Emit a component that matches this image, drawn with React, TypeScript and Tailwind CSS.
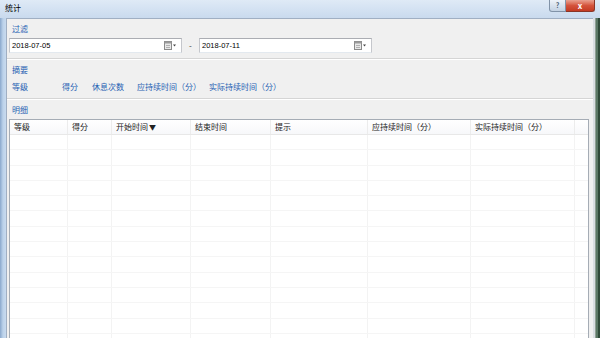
import React from 'react';

const font = { fontFamily: '"Noto Sans CJK SC", "Liberation Sans", sans-serif' };

const columns = [
  { label: '等级', w: 'w-[58px]' },
  { label: '得分', w: 'w-[44px]' },
  { label: '开始时间', w: 'w-[79px]', sort: true },
  { label: '结束时间', w: 'w-[80px]' },
  { label: '提示', w: 'w-[97px]' },
  { label: '应持续时间（分）', w: 'w-[103px]' },
  { label: '实际持续时间（分）', w: 'w-[104px]' },
  { label: '', w: 'flex-1' },
];

function CalendarIcon() {
  return (
    <svg width="13" height="9" viewBox="0 0 13 9" className="shrink-0">
      <rect x="0.5" y="0.5" width="7" height="8" fill="#e8e8e8" stroke="#8a8a8a" />
      <rect x="0.5" y="0.5" width="7" height="2" fill="#9a9a9a" />
      <line x1="2" y1="4.5" x2="6" y2="4.5" stroke="#b0b0b0" />
      <line x1="2" y1="6.5" x2="6" y2="6.5" stroke="#b0b0b0" />
      <path d="M9 3.5 L12 3.5 L10.5 5.5 Z" fill="#444" />
    </svg>
  );
}

function DateInput({ value }: { value: string }) {
  return (
    <div className="w-[173px] h-[15px] bg-white border border-[#c5c7cc] border-t-[#abadb3] border-b-[#e3e9ef] flex items-center pl-[2px] pr-[4px]">
      <span className="flex-1 text-[7.5px] text-black" style={{ fontFamily: '"Liberation Sans", sans-serif' }}>
        {value}
      </span>
      <CalendarIcon />
    </div>
  );
}

function Separator() {
  return (
    <div className="flex flex-col">
      <div className="h-px bg-[#d5d5d5]" />
      <div className="h-px bg-white" />
    </div>
  );
}

function SectionLabel({ text }: { text: string }) {
  return (
    <div className="h-[19px] pt-[4px] pl-[5px] text-[8px] leading-[12px] text-[#1f5fb3]">{text}</div>
  );
}

export default function App() {
  const rows = Array.from({ length: 14 });
  return (
    <div className="w-[600px] h-[338px] overflow-hidden flex flex-col bg-[#c5d8ed]" style={font}>
      {/* Title bar */}
      <div className="h-[18px] flex items-start bg-gradient-to-b from-[#dfeaf6] to-[#c9daee] relative">
        <span className="pl-[5px] pt-[2px] text-[8px] leading-[12px] text-black">统计</span>
        <div className="ml-auto mr-[5px] flex">
          <div className="w-[17px] h-[12px] rounded-bl-[3px] border border-t-0 border-[#8193a8] bg-gradient-to-b from-[#eef3f9] to-[#c3d2e3] flex items-center justify-center text-[7px] font-bold text-[#4a5d75] leading-none">
            ?
          </div>
          <div className="w-[29px] h-[12px] rounded-br-[3px] border border-t-0 border-l-0 border-[#8a3526] bg-gradient-to-b from-[#e8a090] via-[#d4533c] to-[#c43a22] flex items-center justify-center text-[8px] font-bold text-white leading-none">
            x
          </div>
        </div>
      </div>

      {/* Body */}
      <div className="flex-1 flex min-h-0">
        <div className="w-[6px] bg-gradient-to-r from-[#8aa8cc] via-[#bcd2ea] to-[#c8daee]" />
        <div className="flex-1 flex flex-col min-h-0 bg-[#f0f0f0] border-l border-t border-[#a0afc3]">
          {/* Filter */}
          <SectionLabel text="过滤" />
          <div className="flex items-center pl-[2px]">
            <DateInput value="2018-07-05" />
            <span className="w-[17px] text-center text-[8px] text-[#333]">-</span>
            <DateInput value="2018-07-11" />
          </div>
          <div className="mt-[5px]">
            <Separator />
          </div>

          {/* Summary */}
          <SectionLabel text="摘要" />
          <div className="h-[16px] flex items-center pl-[5px] text-[8px] text-[#1f5fb3]">
            <span className="w-[50px]">等级</span>
            <span className="w-[30px]">得分</span>
            <span className="w-[45px]">休息次数</span>
            <span className="w-[72px]">应持续时间（分）</span>
            <span>实际持续时间（分）</span>
          </div>
          <div className="mt-[3px]">
            <Separator />
          </div>

          {/* Detail */}
          <SectionLabel text="明细" />
          <div className="ml-[2px] mr-[4px] flex-1 min-h-0 bg-white border border-[#a5acb5] border-b-0 overflow-hidden flex flex-col">
            <div className="h-[15px] shrink-0 flex border-b border-[#e8e8e8] bg-gradient-to-b from-white to-[#f7f8fa]">
              {columns.map((c, i) => (
                <div
                  key={i}
                  className={`${c.w} h-full flex items-center pl-[4px] text-[8px] text-[#222] ${i < columns.length - 1 ? 'border-r border-[#ececec]' : ''}`}
                >
                  {c.label}
                  {c.sort && <span className="ml-[1px] text-[7px]">▼</span>}
                </div>
              ))}
            </div>
            {rows.map((_, r) => (
              <div key={r} className="h-[15.3px] shrink-0 flex border-b border-[#f5f5f5]">
                {columns.map((c, i) => (
                  <div
                    key={i}
                    className={`${c.w} h-full ${i < columns.length - 1 ? 'border-r border-[#f3f3f3]' : ''}`}
                  />
                ))}
              </div>
            ))}
          </div>
        </div>
        <div className="w-[7px] flex">
          <div className="w-[2px] bg-[#d9dee2]" />
          <div className="w-[1px] bg-[#8f9f94]" />
          <div className="w-[2px] bg-[#5b7865]" />
          <div className="w-[2px] bg-[#2f4a39]" />
        </div>
      </div>
    </div>
  );
}
